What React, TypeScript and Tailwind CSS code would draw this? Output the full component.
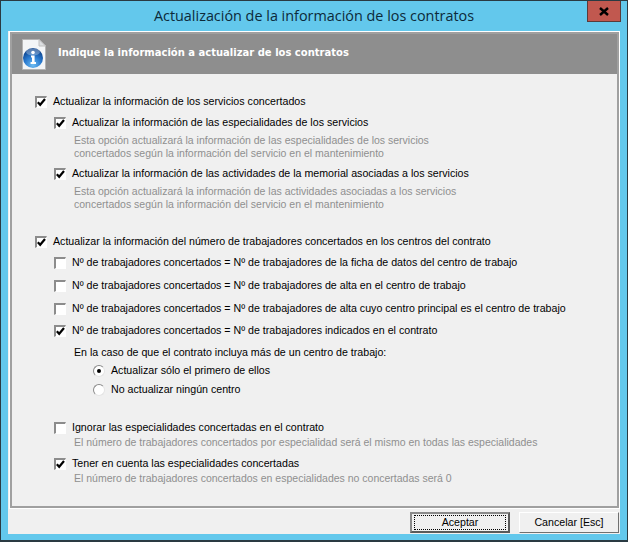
import React from 'react';

const font = "font-['Liberation_Sans',Arial,sans-serif]";

function Check({ checked }: { checked: boolean }) {
  return (
    <span className="w-[12px] h-[12px] shrink-0 bg-white border-t-2 border-l-2 border-r border-b border-t-[#8c8c8c] border-l-[#8c8c8c] border-r-white border-b-white flex items-center justify-center">
      {checked && (
        <svg width="9" height="9" viewBox="0 0 9 9">
          <path d="M0.8 4.2 L3.2 6.8 L8 1" fill="none" stroke="#000" strokeWidth="2.2" />
        </svg>
      )}
    </span>
  );
}

function Radio({ checked }: { checked: boolean }) {
  return (
    <span className="w-[12px] h-[12px] shrink-0 rounded-full bg-white border border-t-[#8a8a8a] border-l-[#8a8a8a] border-r-[#e4e4e4] border-b-[#e4e4e4] flex items-center justify-center">
      {checked && <span className="w-[4px] h-[4px] rounded-full bg-black" />}
    </span>
  );
}

function Option({ label, checked, hint, hintGap = 'mt-[4px]', className = '' }: { label: string; checked: boolean; hint?: string[]; hintGap?: string; className?: string }) {
  return (
    <div className={className}>
      <div className="flex items-center gap-[6px] h-[14px] text-black">
        <Check checked={checked} />
        <span className="whitespace-nowrap">{label}</span>
      </div>
      {hint && (
        <div className={`ml-[20px] ${hintGap} text-[10.5px] text-[#8f8f8f] leading-[13px]`}>
          {hint.map((line) => (
            <div key={line} className="whitespace-nowrap">{line}</div>
          ))}
        </div>
      )}
    </div>
  );
}

function InfoIcon() {
  return (
    <svg width="24" height="31" viewBox="0 0 24 31">
      <defs>
        <radialGradient id="ball" cx="50%" cy="85%" r="75%">
          <stop offset="0%" stopColor="#6dbcf2" />
          <stop offset="55%" stopColor="#2a7bd0" />
          <stop offset="100%" stopColor="#0f4690" />
        </radialGradient>
      </defs>
      <path d="M0.5 0.5 H17 L23.5 7 V30.5 H0.5 Z" fill="#f3f5f7" stroke="#b4b4b4" />
      <path d="M17 0.5 V7 H23.5 Z" fill="#dcdfe2" stroke="#c0c0c0" />
      <circle cx="11" cy="19" r="10" fill="url(#ball)" />
      <ellipse cx="11" cy="13" rx="7" ry="3.5" fill="#fff" opacity="0.3" />
      <circle cx="11" cy="13.5" r="1.8" fill="#fff" />
      <path d="M9 16.5 H12.6 V23 H14 V25 H8.6 V23 H10 V18.5 H9 Z" fill="#fff" />
    </svg>
  );
}

export default function App() {
  return (
    <div className={`w-[628px] h-[542px] flex flex-col bg-[#63c8ec] border border-[#2a3a42] border-b-2 ${font} text-[10.65px] overflow-hidden`}>
      {/* title bar */}
      <div className="h-[30px] relative flex items-center justify-center shrink-0">
        <span className="font-['Open_Sans',sans-serif] text-[14.4px] text-[#0c2a3a]">
          Actualización de la información de los contratos
        </span>
        <div className="absolute top-0 right-[6px] w-[34px] h-[21px] bg-[#c1584f] border border-t-0 border-[#5a3a3a] flex items-center justify-center">
          <svg width="10" height="9" viewBox="0 0 10 9">
            <path d="M1 1 L9 8 M9 1 L1 8" stroke="#000" strokeWidth="2.4" />
          </svg>
        </div>
      </div>

      {/* client area */}
      <div className="flex-1 mx-[7px] mb-[6px] bg-[#f0f0f0] flex flex-col min-h-0">
        <div className="flex-1 mt-[1px] ml-[2px] mr-[1px] border-2 border-[#a0a0a0] outline outline-white flex flex-col min-h-0">
          <div className="h-[40px] bg-[#8e8e8e] shrink-0 flex items-center pl-[10px] gap-[12px]">
            <InfoIcon />
            <span className="font-['DejaVu_Sans',sans-serif] font-bold text-[10px] text-white mb-[3px]">
              Indique la información a actualizar de los contratos
            </span>
          </div>

          <div className="flex-1 pl-[23px] pt-[21px]">
            <Option checked label="Actualizar la información de los servicios concertados" />
            <div className="ml-[19px]">
              <Option
                className="mt-[7px]"
                checked
                label="Actualizar la información de las especialidades de los servicios"
                hint={[
                  'Esta opción actualizará la información de las especialidades de los servicios',
                  'concertados según la información del servicio en el mantenimiento',
                ]}
              />
              <Option
                className="mt-[7px]"
                checked
                label="Actualizar la información de las actividades de la memorial asociadas a los servicios"
                hint={[
                  'Esta opción actualizará la información de las actividades asociadas a los servicios',
                  'concertados según la información del servicio en el mantenimiento',
                ]}
              />
            </div>

            <Option className="mt-[24px]" checked label="Actualizar la información del número de trabajadores concertados en los centros del contrato" />
            <div className="ml-[19px]">
              <Option className="mt-[7px]" checked={false} label="Nº de trabajadores concertados = Nº de trabajadores de la ficha de datos del centro de trabajo" />
              <Option className="mt-[9px]" checked={false} label="Nº de trabajadores concertados = Nº de trabajadores de alta en el centro de trabajo" />
              <Option className="mt-[9px]" checked={false} label="Nº de trabajadores concertados = Nº de trabajadores de alta cuyo centro principal es el centro de trabajo" />
              <Option className="mt-[8px]" checked label="Nº de trabajadores concertados = Nº de trabajadores indicados en el contrato" />
              <div className="ml-[20px] mt-[7px] h-[14px] leading-[14px] text-black">
                En la caso de que el contrato incluya más de un centro de trabajo:
              </div>
              <div className="ml-[39px] mt-[5px] flex items-center gap-[6px] h-[14px]">
                <Radio checked />
                <span>Actualizar sólo el primero de ellos</span>
              </div>
              <div className="ml-[39px] mt-[5px] flex items-center gap-[6px] h-[14px]">
                <Radio checked={false} />
                <span>No actualizar ningún centro</span>
              </div>
              <Option
                className="mt-[24px]"
                checked={false}
                label="Ignorar las especialidades concertadas en el contrato"
                hintGap="mt-[1px]"
                hint={['El número de trabajadores concertados por especialidad será el mismo en todas las especialidades']}
              />
              <Option
                className="mt-[8px]"
                checked
                label="Tener en cuenta las especialidades concertadas"
                hintGap="mt-[1px]"
                hint={['El número de trabajadores concertados en especialidades no concertadas será 0']}
              />
            </div>
          </div>
        </div>

        {/* footer */}
        <div className="h-[26px] shrink-0 flex items-center justify-end gap-[9px] pr-[1px] pt-[2px]">
          <button className="w-[100px] h-[21px] bg-[#f0f0f0] border-2 border-t-[#8a8a8a] border-l-[#8a8a8a] border-r-[#5a5a5a] border-b-[#5a5a5a] flex items-center justify-center">
            <span className="w-[92px] h-[15px] border border-dotted border-black flex items-center justify-center leading-none">Aceptar</span>
          </button>
          <button className="w-[100px] h-[21px] bg-[#f0f0f0] border border-t-white border-l-white border-r-[#707070] border-b-[#707070] flex items-center justify-center leading-none">
            Cancelar [Esc]
          </button>
        </div>
      </div>
    </div>
  );
}
